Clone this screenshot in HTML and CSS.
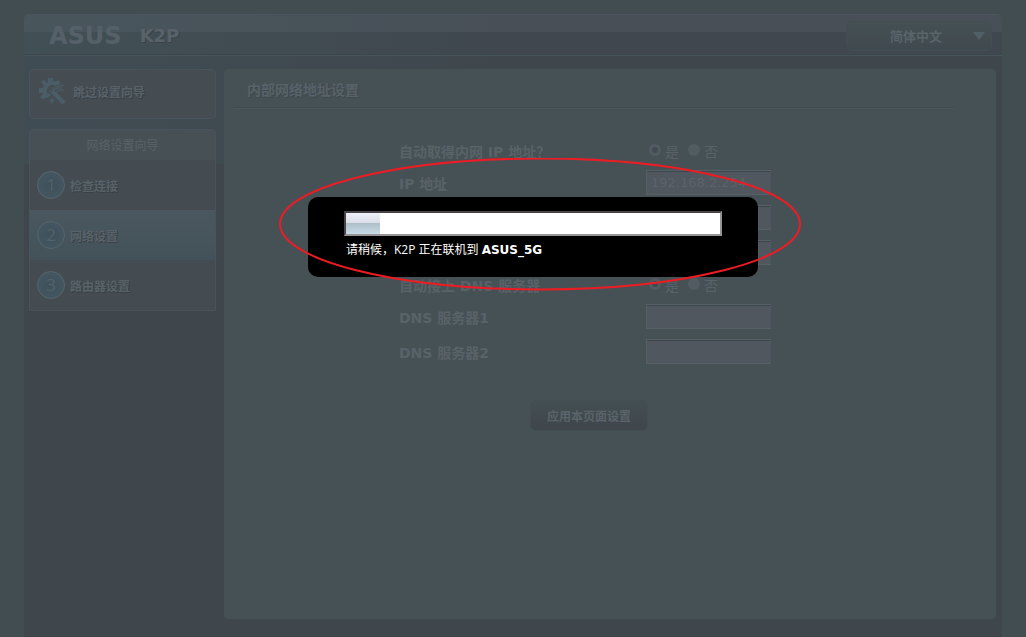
FILE: index.html
```html
<!DOCTYPE html>
<html lang="zh-CN">
<head>
    <meta charset="UTF-8">
    <meta name="viewport" content="width=device-width, initial-scale=1.0">
    <title>K2P - 网络设置向导</title>
    <link rel="stylesheet" href="styles.css">
</head>
<body>

<div class="container">
    <header class="header">
        <span class="logo">ASUS</span>
        <span class="model">K2P</span>
        <div class="lang">
            <select class="lang-select" aria-label="语言">
                <option>简体中文</option>
            </select>
            <span class="lang-arrow"></span>
        </div>
    </header>

    <div class="main">
        <nav class="sidebar">
            <a class="skip" href="#">
                <svg class="skip-icon" viewBox="0 0 28 28" width="28" height="28">
                    <path d="M19 7.500A7.500 7.500 0 1 0 10 20" fill="none" stroke="currentColor" stroke-width="4"/>
                    <path d="M10 1h5v4h-5zM3 5l3-2 3 3-3 3zM17 5l3-2 2.500 2.500-2 3zM1 11h4v5H1zM2 20l4-4 3 3-4 3.500z" fill="currentColor"/>
                    <path d="M14 14l12 12" stroke="currentColor" stroke-width="4"/>
                    <path d="M11 15q5-6 15-7M15 13q5-3 9-2M18 15q3-3 8-2" fill="none" stroke="currentColor" stroke-width="1"/>
                    <path d="M14 20l1 2.500 2.500 1-2.500 1-1 2.500-1-2.500-2.500-1 2.500-1zM11 16l1 1 1 1-1 1-1 1-1-1-1-1 1-1z" fill="currentColor"/>
                </svg>
                跳过设置向导
            </a>
            <div class="menu">
                <div class="menu-title">网络设置向导</div>
                <a class="menu-item" href="#"><span class="num">1</span>检查连接</a>
                <a class="menu-item active" href="#"><span class="num">2</span>网络设置</a>
                <a class="menu-item" href="#"><span class="num">3</span>路由器设置</a>
            </div>
        </nav>

        <main class="panel">
            <h1 class="panel-title">内部网络地址设置</h1>
            <form class="form">
                <div class="row row-radio">
                    <span class="name">自动取得内网 IP 地址？</span>
                    <label class="choice"><input type="radio" name="dhcp" checked>是</label>
                    <label class="choice"><input type="radio" name="dhcp">否</label>
                </div>
                <div class="row">
                    <label class="name" for="ip">IP 地址</label>
                    <input class="text" type="text" id="ip" value="192.168.2.254">
                </div>
                <div class="row">
                    <span class="name"></span>
                    <input class="text" type="text" aria-label="子网掩码">
                </div>
                <div class="row">
                    <span class="name"></span>
                    <input class="text" type="text" aria-label="默认网关">
                </div>
                <div class="row row-radio">
                    <span class="name">自动接上 DNS 服务器</span>
                    <label class="choice"><input type="radio" name="dns" checked>是</label>
                    <label class="choice"><input type="radio" name="dns">否</label>
                </div>
                <div class="row">
                    <label class="name" for="dns1">DNS 服务器1</label>
                    <input class="text" type="text" id="dns1">
                </div>
                <div class="row">
                    <label class="name" for="dns2">DNS 服务器2</label>
                    <input class="text" type="text" id="dns2">
                </div>
                <button class="apply" type="button">应用本页面设置</button>
            </form>
        </main>
    </div>
</div>

<!-- 联机进度 -->
<div class="loading" role="dialog" aria-label="联机进度">
    <progress class="bar" id="bar" value="9" max="100"></progress>
    <label class="loading-text" for="bar">请稍候，K2P 正在联机到 <b>ASUS_5G</b></label>
    <svg class="mark" viewBox="0 0 524 134" width="524" height="134">
        <ellipse cx="262" cy="66" rx="260" ry="65.500" fill="none" stroke="#ed1c24" stroke-width="2"/>
    </svg>
</div>

</body>
</html>
```

FILE: styles.css
```css
* {
    box-sizing: border-box;
}

body {
    margin: 0;
    padding: 14px 24px 0;
    background-color: #424d52;
    color: #586268;
    font-family: "DejaVu Sans", "Noto Sans CJK SC", sans-serif;
    font-size: 12px;
}

a {
    color: inherit;
    text-decoration: none;
}

.container {
    min-height: calc(100vh - 14px);
    background: linear-gradient(to right, #41515980, #40474e00 50%) 0 0 / 100% 150px no-repeat #3f474d;
    border-bottom: 1px solid #3b4147;
    border-radius: 5px 5px 0 0;
}

/* header */
.header {
    display: flex;
    align-items: center;
    height: 41px;
    padding: 2px 10px 0 25px;
    background:
        linear-gradient(to right, #48565c, #484f57 50%) 0 0 / 100% 17px no-repeat,
        linear-gradient(to right, #415055, #40474e 50%);
    border-top: 1px solid #4a565b;
    border-bottom: 1px solid #3b454a;
    border-radius: 5px 5px 0 0;
    box-shadow: 0 1px 0 #47555b;
}

.logo {
    color: #566068;
    font-size: 24px;
    font-weight: bold;
    line-height: 24px;
}

.model {
    margin-left: 18px;
    font-size: 18px;
    font-weight: bold;
    text-shadow: 1px 1px 0 #39444a;
}

.lang {
    position: relative;
    margin-left: auto;
}

.lang-select {
    appearance: none;
    display: block;
    width: 146px;
    height: 30px;
    padding: 0 6px 0 0;
    border: 1px solid #434d52;
    border-radius: 6px;
    background: linear-gradient(#445054, #40494f);
    color: #596369;
    font: bold 13px "Open Sans", "Noto Sans CJK SC", sans-serif;
    text-align-last: center;
}

.lang-arrow {
    position: absolute;
    top: 11px;
    right: 7px;
    border: 6px solid transparent;
    border-top: 8px solid #506067;
    border-bottom: 0;
    pointer-events: none;
}

.main {
    display: flex;
    align-items: flex-start;
    gap: 8px;
    padding: 14px 6px 17px 5px;
}

/* sidebar */
.sidebar {
    flex: none;
    width: 187px;
    font-weight: bold;
    text-shadow: 1px 1px 0 #394046;
}

.skip {
    display: flex;
    align-items: center;
    gap: 7px;
    height: 50px;
    margin-bottom: 10px;
    padding: 0 8px 6px;
    background-color: #454c52;
    border: 1px solid #49545a;
    border-radius: 4px;
}

.skip-icon {
    color: #4b5e67;
}

.menu {
    background-color: #444c51;
    border: 1px solid #49545a;
    border-radius: 4px 4px 0 0;
}

.menu-title {
    height: 30px;
    line-height: 32px;
    background-color: #475055;
    font-weight: normal;
    text-align: center;
    text-shadow: none;
}

.menu-item {
    display: flex;
    align-items: center;
    gap: 5px;
    height: 50px;
    padding: 0 7px;
}

.menu-item.active {
    background: linear-gradient(#4a575e, #43525a);
}

.num {
    flex: none;
    width: 28px;
    height: 28px;
    border: 1px solid #57646b;
    border-radius: 50%;
    background: radial-gradient(circle at 50% 50%, #3e505a, #465964);
    color: #53626a;
    font: 17px/25px "Open Sans", sans-serif;
    text-align: center;
    text-shadow: none;
}

/* content */
.panel {
    flex: 1;
    min-height: 550px;
    background-color: #465155;
    border-radius: 4px;
}

.panel-title {
    height: 40px;
    margin: 0 42px 27px 10px;
    padding-left: 13px;
    border-bottom: 1px solid #4b565b;
    box-shadow: inset 0 -1px 0 #414a50;
    font-size: 14px;
    line-height: 42px;
    text-shadow: 1px 1px 0 #3e484e;
}

.form {
    max-width: 432px;
    margin: 0 auto;
    padding: 0 47px 0 5px;
    font-size: 14px;
}

.row {
    display: flex;
    align-items: center;
    height: 35px;
}

.row-radio {
    height: 29px;
}

.name {
    flex: none;
    width: 247px;
    font-weight: bold;
}

.text {
    width: 125px;
    height: 25px;
    padding: 0 4px;
    border: 1px solid #566067;
    border-right-color: #50575f;
    background-color: #50575f;
    box-shadow: inset 0 1px 0 #3e454c;
    color: #5a6469;
    font: 13px "DejaVu Sans", sans-serif;
}

.choice {
    display: flex;
    align-items: center;
    gap: 4px;
    width: 39px;
}

.choice input {
    appearance: none;
    flex: none;
    width: 12px;
    height: 12px;
    margin: 0 0 2px 3px;
    border-radius: 50%;
    background-color: #535b62;
}

.choice input:checked {
    border: 3px solid #535b62;
    background-color: #424b51;
}

.apply {
    display: block;
    width: 118px;
    height: 31px;
    margin: 31px auto 0;
    padding: 0;
    border: 1px solid #434d52;
    border-radius: 6px;
    background: linear-gradient(#434e52, #3f464d);
    color: #5a646a;
    font: bold 12px "Open Sans", "Noto Sans CJK SC", sans-serif;
}

/* loading dialog */
.loading {
    position: absolute;
    top: 197px;
    left: calc(50% - 205px);
    width: 450px;
    height: 80px;
    padding: 14px 36px;
    background-color: #000;
    border-radius: 10px;
    color: #fff;
    font: 12px/18px "Open Sans", "Noto Sans CJK SC", sans-serif;
}

.bar {
    appearance: none;
    display: block;
    width: 100%;
    height: 25px;
    margin-bottom: 5px;
    border: 2px solid;
    border-color: #474347 #959595 #959595 #474347;
    background-color: #fff;
}

.bar::-webkit-progress-bar {
    background-color: #fff;
}

.bar::-webkit-progress-value {
    background: linear-gradient(#eef1f8, #d9dde6 48%, #aebfc9 49%, #c8dbe7);
}

.loading-text {
    display: block;
    padding-left: 2px;
}

.loading-text b {
    font-family: "DejaVu Sans", sans-serif;
}

.mark {
    position: absolute;
    top: -39px;
    left: -30px;
    pointer-events: none;
}
```
